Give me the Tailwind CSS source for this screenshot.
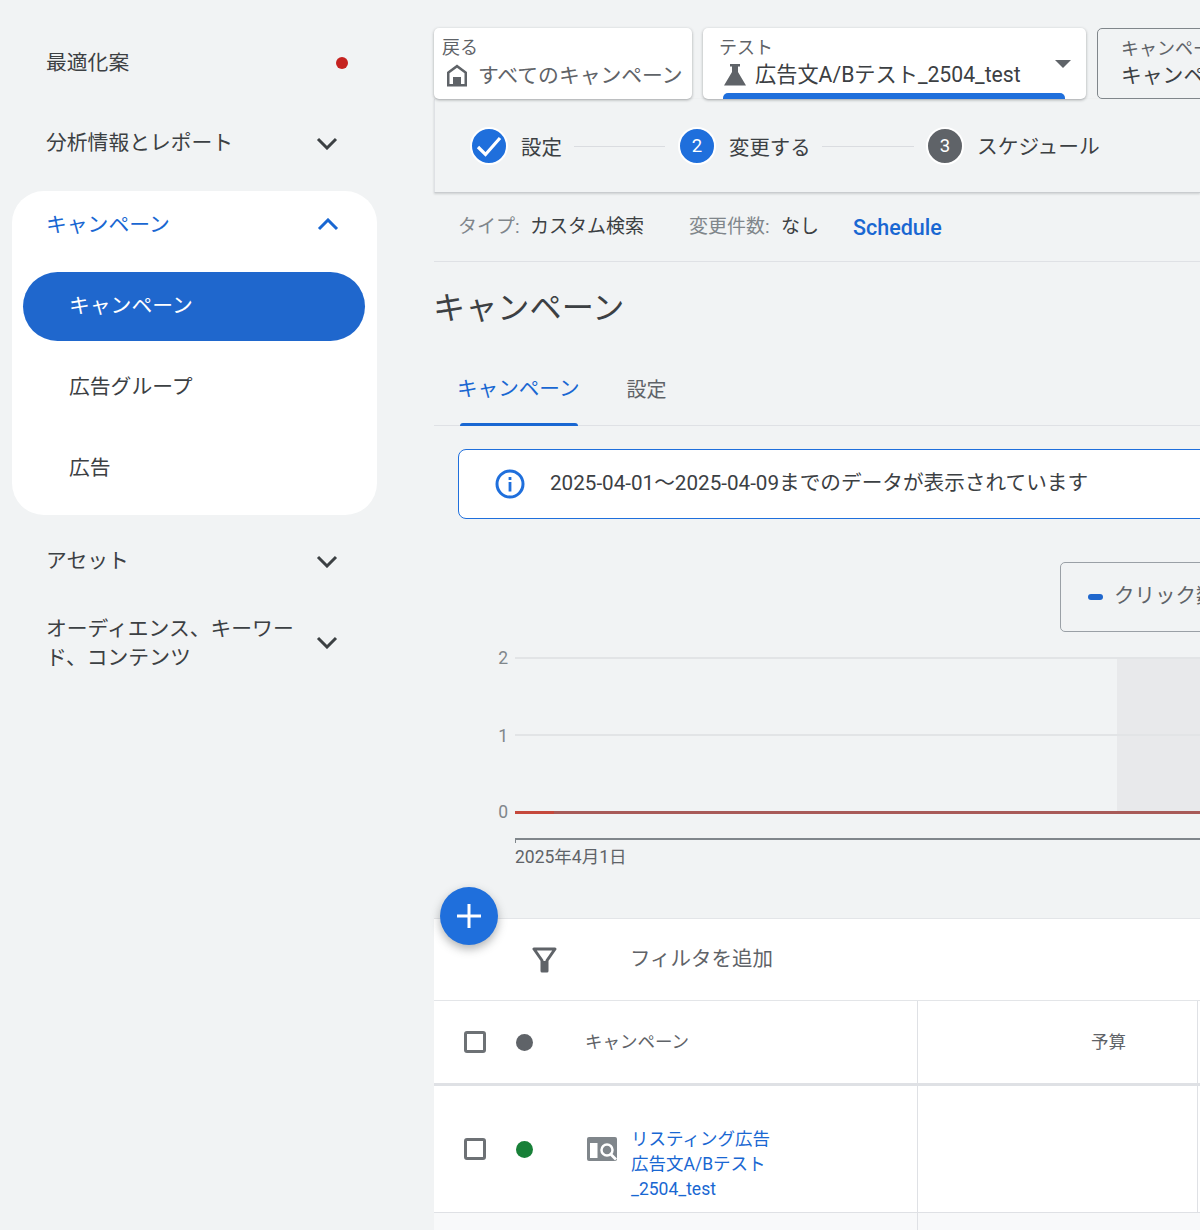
<!DOCTYPE html>
<html lang="ja">
<head>
  <meta charset="UTF-8">
  <meta name="viewport" content="width=device-width, initial-scale=1.0">
  <title>キャンペーン</title>
  <script src="https://cdn.jsdelivr.net/npm/@tailwindcss/browser@4"></script>
</head>
<body class="bg-[#f1f3f4] font-['Roboto','Noto_Sans_CJK_JP',sans-serif] text-[#3c4043]">
  <div class="flex w-[1200px] h-[1230px] overflow-hidden">

    <!-- sidebar -->
    <aside class="w-[434px] shrink-0 text-[20.8px] text-[#3c4043]">
      <div class="h-[62px] mt-[32px] pl-[46px] pr-[86px] flex items-center justify-between">
        <span class="pt-[2px]">最適化案</span>
        <span class="w-[12px] h-[12px] rounded-full bg-[#c5221f]"></span>
      </div>
      <div class="h-[62px] mt-[18px] pl-[46px] pr-[96px] flex items-center justify-between">
        <span class="pt-[2px]">分析情報とレポート</span>
        <svg class="w-[22px] h-[14px]" viewBox="0 0 22 14" fill="none" stroke="#3c4043" stroke-width="3"><path d="M2 3l9 9 9-9"/></svg>
      </div>
      <div class="ml-[12px] mt-[17px] w-[365px] h-[324px] bg-white rounded-[32px] overflow-hidden">
        <div class="h-[68px] pl-[34px] pr-[38px] flex items-center justify-between text-[#1967d2]">
          <span class="pt-[2px]">キャンペーン</span>
          <svg class="w-[22px] h-[14px]" viewBox="0 0 22 14" fill="none" stroke="#1967d2" stroke-width="3"><path d="M2 11l9-9 9 9"/></svg>
        </div>
        <div class="ml-[11px] mr-[12px] mt-[13px] h-[69px] rounded-full bg-[#1f67cd] text-white pl-[46px] pt-[1px] flex items-center">キャンペーン</div>
        <div class="h-[82px] mt-[4px] pl-[57px] pt-[3px] flex items-center">広告グループ</div>
        <div class="h-[82px] pl-[57px] pt-[2px] flex items-center">広告</div>
      </div>
      <div class="h-[62px] mt-[15px] pl-[46px] pr-[96px] flex items-center justify-between">
        <span class="pt-[1px]">アセット</span>
        <svg class="w-[22px] h-[14px]" viewBox="0 0 22 14" fill="none" stroke="#3c4043" stroke-width="3"><path d="M2 3l9 9 9-9"/></svg>
      </div>
      <div class="mt-[22px] pl-[46px] pr-[96px] flex items-center justify-between">
        <span class="w-[262px] leading-[29px] pt-[1px]">オーディエンス、キーワード、コンテンツ</span>
        <svg class="w-[22px] h-[14px] shrink-0 mb-[4px]" viewBox="0 0 22 14" fill="none" stroke="#3c4043" stroke-width="3"><path d="M2 3l9 9 9-9"/></svg>
      </div>
    </aside>

    <!-- main -->
    <main class="w-[766px] shrink-0 relative">
      <!-- top selectors -->
      <div class="flex gap-[11px] mt-[28px] h-[71px]">
        <div class="w-[258px] shrink-0 bg-white rounded-[5px] shadow-[0_1px_3px_rgba(60,64,67,0.45)] pl-[8px] pt-[8px]">
          <div class="text-[18px] leading-[24px] text-[#5f6368]">戻る</div>
          <div class="flex items-center gap-[10px] pl-[4px] text-[20.8px] leading-[30px] text-[#5f6368]">
            <svg class="w-[22px] h-[23px] shrink-0" viewBox="0 0 22 23" fill="#5f6368"><path fill-rule="evenodd" d="M11 0.500L1 8v14.500h20V8L11 0.500zm0 3.200L18.500 9.300V20H3.500V9.300L11 3.700z"/><rect x="7" y="13" width="8" height="8"/></svg>
            <span class="whitespace-nowrap pt-[1px]">すべてのキャンペーン</span>
          </div>
        </div>
        <div class="w-[383px] shrink-0 bg-white rounded-[5px] shadow-[0_1px_3px_rgba(60,64,67,0.45)] relative pl-[16px] pt-[8px] overflow-hidden">
          <div class="text-[18px] leading-[24px] text-[#5f6368]">テスト</div>
          <div class="flex items-center gap-[8px] pl-[4px] text-[21.2px] leading-[30px] text-[#3c4043]">
            <svg class="w-[24px] h-[24px] shrink-0" viewBox="0 0 24 24" fill="#5f6368"><path d="M7 1h10v2.500h-2V9l8 13.500H1L9 9V3.500H7z"/></svg>
            <span class="whitespace-nowrap">広告文A/Bテスト_2504_test</span>
          </div>
          <span class="absolute right-[15px] top-[32px] w-0 h-0 border-x-[8px] border-x-transparent border-t-[8px] border-t-[#5f6368]"></span>
          <span class="absolute left-[20px] bottom-0 w-[342px] h-[6px] bg-[#1f6fdc] rounded-t-[5px]"></span>
        </div>
        <div class="w-[300px] shrink-0 border border-[#80868b] rounded-[5px] pl-[23px] pt-[8px] text-[#5f6368]">
          <div class="text-[18px] leading-[24px] whitespace-nowrap">キャンペーン</div>
          <div class="text-[20.8px] leading-[30px] whitespace-nowrap text-[#3c4043]">キャンペーン</div>
        </div>
      </div>

      <!-- stepper -->
      <div class="h-[94px] border-l border-b border-[#c9cccf] border-l-[#dfe1e5] shadow-[0_1px_2px_rgba(60,64,67,0.2)] pl-[35px] pt-[1px] flex items-center text-[20.4px]">
        <span class="w-[38px] h-[38px] rounded-full bg-[#1f6fdc] border-2 border-white flex items-center justify-center shrink-0">
          <svg class="w-[26px] h-[22px]" viewBox="0 0 26 22" fill="none" stroke="white" stroke-width="3.200"><path d="M2 12l7.500 7.500L24 3"/></svg>
        </span>
        <span class="ml-[13px] w-[41px] pt-[4px]">設定</span>
        <span class="ml-[12px] w-[91px] h-px bg-[#dadce0]"></span>
        <span class="ml-[13px] w-[38px] h-[38px] rounded-full bg-[#1f6fdc] border-2 border-white text-white text-[18.500px] pt-[1px] flex items-center justify-center shrink-0">2</span>
        <span class="ml-[13px] w-[81px] pt-[4px] whitespace-nowrap">変更する</span>
        <span class="ml-[12px] w-[92px] h-px bg-[#dadce0]"></span>
        <span class="ml-[12px] w-[38px] h-[38px] rounded-full bg-[#5f6368] border-2 border-white text-white text-[18.500px] pt-[1px] flex items-center justify-center shrink-0">3</span>
        <span class="ml-[13px] pt-[4px] whitespace-nowrap text-[20.7px]">スケジュール</span>
      </div>

      <!-- summary -->
      <div class="h-[69px] border-b border-[#dfe1e5] pl-[24px] flex items-center text-[19px]">
        <span class="text-[#80868b] w-[72px] whitespace-nowrap">タイプ:</span>
        <span class="w-[114px] whitespace-nowrap">カスタム検索</span>
        <span class="ml-[45px] text-[#80868b] w-[92px] whitespace-nowrap">変更件数:</span>
        <span class="w-[37px] whitespace-nowrap">なし</span>
        <span class="ml-[35px] text-[21.5px] font-medium text-[#1967d2] pt-[2px]">Schedule</span>
      </div>

      <h1 class="h-[88px] flex items-center text-[32.2px] -ml-[1px] text-[#3c4043] pt-[4px]">キャンペーン</h1>

      <!-- tabs -->
      <div class="h-[76px] border-b border-[#dfe1e5] flex pl-[23px] text-[20.6px]">
        <div class="relative h-[76px] flex items-center pt-[3px] text-[#1967d2]">
          キャンペーン
          <span class="absolute left-[3px] right-[2px] bottom-0 h-[3px] bg-[#1967d2] rounded-t-[3px]"></span>
        </div>
        <div class="ml-[47px] h-[76px] flex items-center text-[20px] text-[#5f6368] pt-[3px]">設定</div>
      </div>

      <!-- info banner -->
      <div class="ml-[24px] mt-[23px] w-[800px] h-[70px] bg-white border-[1.5px] border-[#1f6fdc] rounded-[8px] pl-[36px] flex items-center gap-[25px]">
        <svg class="w-[30px] h-[30px] shrink-0" viewBox="0 0 30 30" fill="none"><circle cx="15" cy="15" r="13" stroke="#1f6fdc" stroke-width="3"/><rect x="13.600" y="13" width="2.800" height="9.500" fill="#1f6fdc"/><rect x="13.600" y="8" width="2.800" height="3" fill="#1f6fdc"/></svg>
        <span class="text-[20.65px] whitespace-nowrap pb-[2px]">2025-04-01～2025-04-09までのデータが表示されています</span>
      </div>

      <!-- legend card -->
      <div class="ml-[626px] mt-[43px] w-[300px] h-[70px] border border-[#9aa0a6] rounded-[5px] pl-[27px] flex items-center gap-[11px] text-[20.500px] text-[#5f6368]">
        <span class="w-[15px] h-[6px] rounded-[3px] bg-[#1f67cd]"></span>
        <span class="whitespace-nowrap pb-[2px]">クリック数</span>
      </div>

      <!-- chart -->
      <div class="relative h-[286px] text-[17.500px] text-[#80868b]">
        <div class="absolute left-[683px] top-[26px] w-[120px] h-[154px] bg-[#e8e9eb]"></div>
        <div class="absolute left-0 top-[14px] flex items-center w-[800px] h-[24px]"><span class="w-[74px] text-right">2</span><span class="ml-[7px] flex-1 h-[2px] bg-[#e2e4e6]"></span></div>
        <div class="absolute left-0 top-[91px] flex items-center w-[800px] h-[24px]"><span class="w-[74px] text-right pt-[2px]">1</span><span class="ml-[7px] flex-1 h-[2px] bg-[#e2e4e6]"></span></div>
        <div class="absolute left-0 top-[168px] flex items-center w-[800px] h-[24px]"><span class="w-[74px] text-right">0</span><span class="ml-[7px] flex-1 h-[3px] bg-[#a85a58]"></span></div>
        <div class="absolute left-[81px] top-[179px] w-[39px] h-[3px] bg-[#c5483c]"></div>
        <div class="absolute left-[81px] top-[206px] w-[720px] h-[5px] border-t-2 border-l border-[#80868b]"></div>
        <div class="absolute left-[81px] top-[212px] text-[#5f6368] whitespace-nowrap">2025年4月1日</div>
      </div>

      <!-- filter bar -->
      <div class="h-[83px] bg-white border-y border-[#e3e5e8] flex items-center pl-[98px] text-[20.5px] text-[#5f6368]">
        <svg class="w-[25px] h-[26px] shrink-0" viewBox="0 0 25 26" fill="none"><path d="M2 2h21l-8 11.500V24h-5V13.500z" stroke="#5f6368" stroke-width="3" stroke-linejoin="round"/><path d="M10 14h5v10h-5z" fill="#5f6368"/></svg>
        <span class="ml-[73px]">フィルタを追加</span>
      </div>

      <!-- table -->
      <div class="h-[85px] bg-white border-b-[3px] border-[#dfe1e5] flex text-[17.500px] text-[#5f6368]">
        <div class="w-[484px] border-r border-[#dfe1e5] flex items-center pl-[30px]">
          <span class="w-[22px] h-[22px] border-[3px] border-[#6d7175] rounded-[3px] shrink-0"></span>
          <span class="ml-[30px] w-[17px] h-[17px] rounded-full bg-[#5f6368] shrink-0"></span>
          <span class="ml-[52px]">キャンペーン</span>
        </div>
        <div class="w-[280px] border-r border-[#dfe1e5] flex items-center justify-end pr-[71px]">予算</div>
      </div>
      <div class="h-[127px] bg-white border-b border-[#dfe1e5] flex text-[17.500px] text-[#1967d2]">
        <div class="w-[484px] border-r border-[#dfe1e5] flex items-center pl-[30px]">
          <span class="w-[22px] h-[22px] border-[3px] border-[#6d7175] rounded-[3px] shrink-0"></span>
          <span class="ml-[30px] w-[17px] h-[17px] rounded-full bg-[#188038] shrink-0"></span>
          <svg class="ml-[54px] w-[30px] h-[24px] shrink-0" viewBox="0 0 30 24"><rect width="30" height="24" rx="2" fill="#80868b"/><rect x="3" y="6" width="7.500" height="15" fill="white"/><circle cx="20" cy="13" r="5.500" fill="#80868b" stroke="white" stroke-width="2.500"/><path d="M24 17.500l5 5" stroke="white" stroke-width="2.800"/></svg>
          <div class="ml-[14px] mt-[30px] leading-[25px]">リスティング広告<br>広告文A/Bテスト<br>_2504_test</div>
        </div>
        <div class="w-[280px] border-r border-[#dfe1e5]"></div>
      </div>
      <div class="h-[20px] bg-[#f8f9fa] flex"><div class="w-[484px] border-r border-[#dfe1e5]"></div></div>

      <!-- add button -->
      <button class="absolute left-[6px] top-[887px] w-[58px] h-[58px] rounded-full bg-[#1f6fdc] shadow-[0_4px_10px_rgba(60,64,67,0.4)] flex items-center justify-center">
        <svg class="w-[26px] h-[26px]" viewBox="0 0 26 26" stroke="white" stroke-width="3"><path d="M13 1v24M1 13h24"/></svg>
      </button>
    </main>
  </div>
</body>
</html>
